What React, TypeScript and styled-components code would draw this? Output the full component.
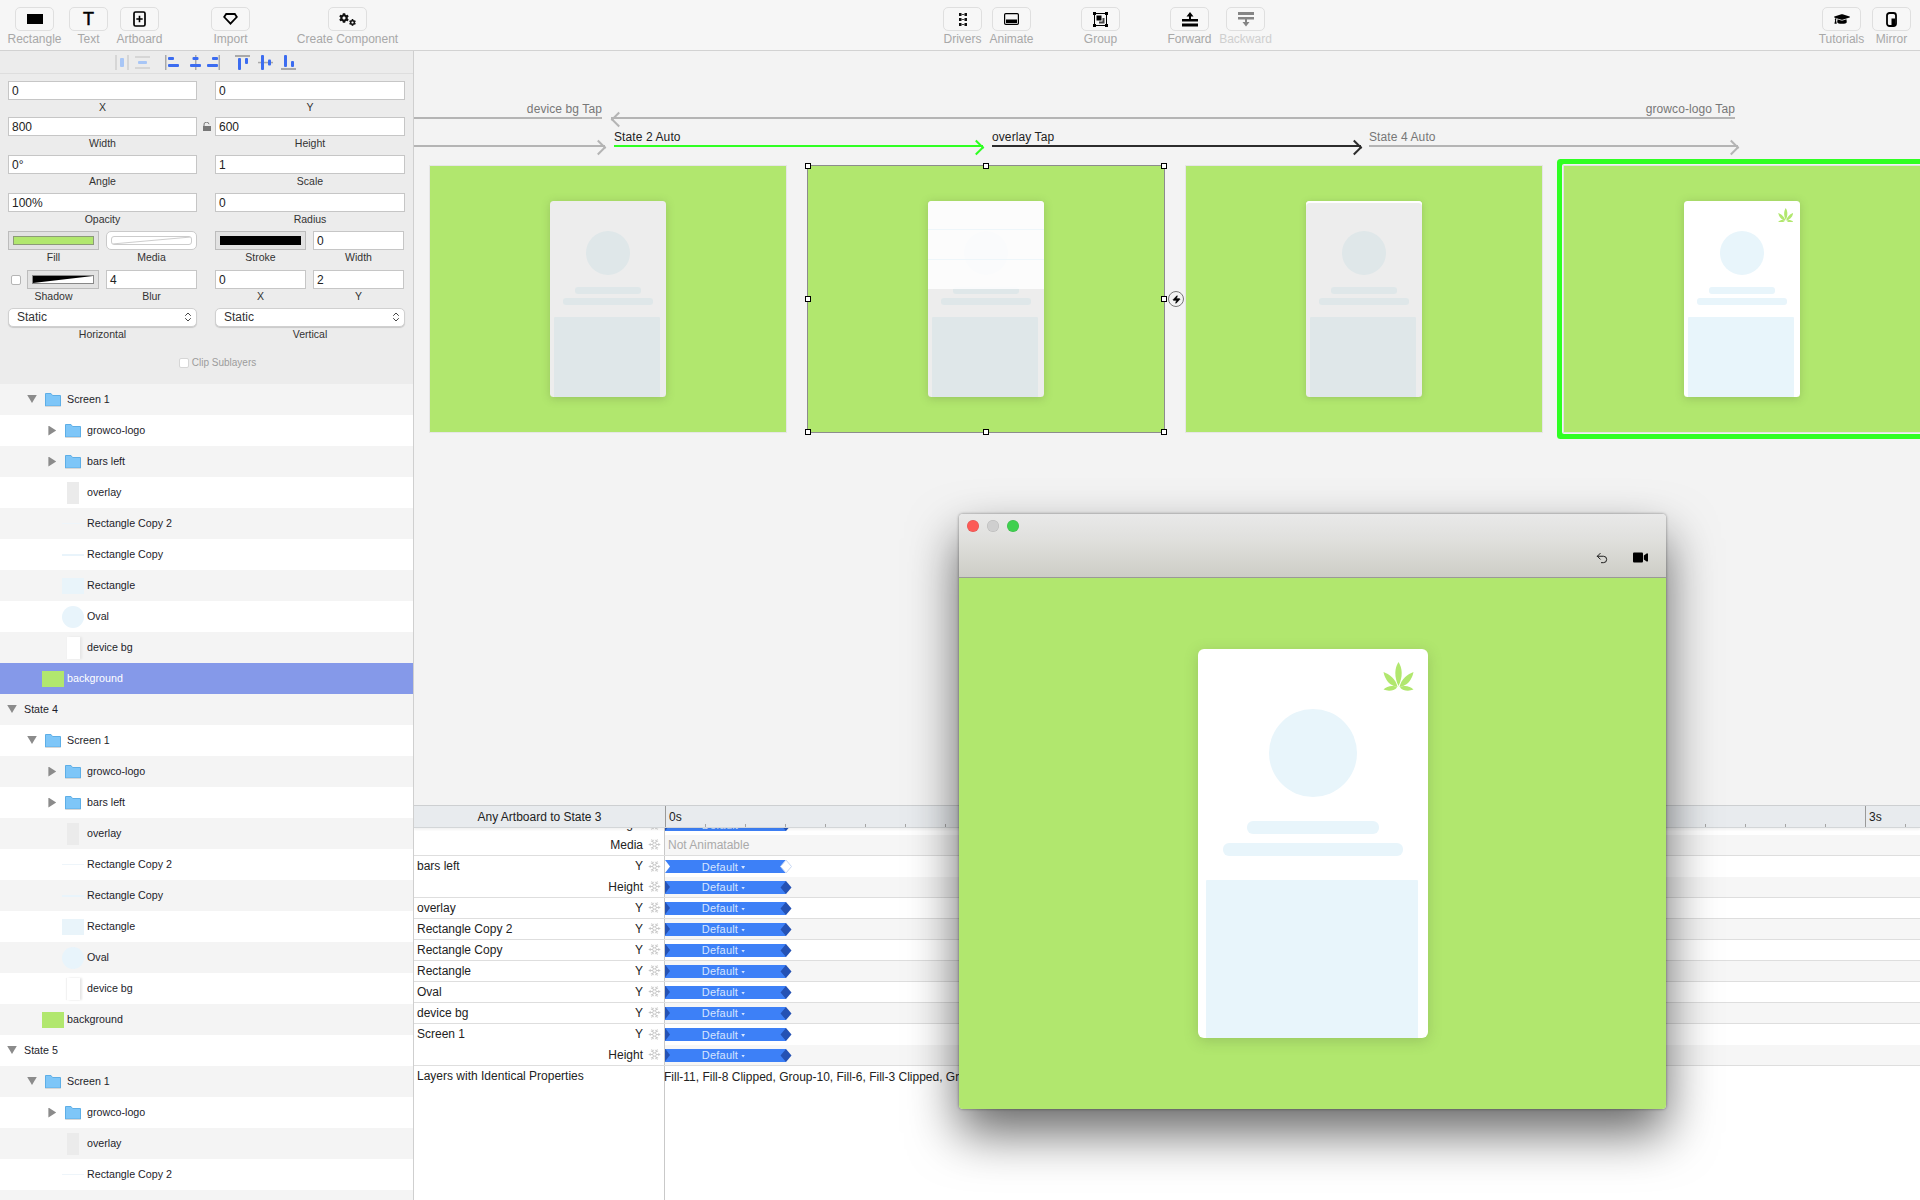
import React from "react";
import styled, { createGlobalStyle, css } from "styled-components";
import { ChevronsUpDown, Snowflake, Undo2, Zap } from "lucide-react";
import { FaCog, FaGraduationCap, FaVideo } from "react-icons/fa";

const GREEN = "#b1e76e";

const Global = createGlobalStyle`
  html, body {
    margin: 0;
    height: 100%;
    overflow: hidden;
    background: #fff;
    font-family: "Liberation Sans", Arial, sans-serif;
    color: #222;
  }
  * { box-sizing: border-box; }
`;

const Page = styled.div`
  width: 1920px;
  height: 1200px;
  display: flex;
  flex-direction: column;
  overflow: hidden;
`;

/* ---------- toolbar ---------- */

const Toolbar = styled.header`
  flex: none;
  height: 51px;
  display: flex;
  padding: 7px 0 0 15px;
  background: #f6f6f6;
  border-bottom: 1px solid #d2d2d2;
`;

const Tool = styled.div<{ $ml?: number }>`
  flex: none;
  width: 39px;
  margin-left: ${(p) => p.$ml ?? 0}px;
  display: flex;
  flex-direction: column;
  align-items: center;
`;

const ToolButton = styled.div`
  width: 39px;
  height: 24px;
  flex: none;
  display: flex;
  align-items: center;
  justify-content: center;
  background: #f7f7f7;
  border: 1px solid #dfdfdf;
  border-radius: 5px;
`;

const ToolLabel = styled.span<{ $off?: boolean }>`
  margin-top: 1px;
  font-size: 12px;
  line-height: 15px;
  white-space: nowrap;
  color: ${(p) => (p.$off ? "#cfcfcf" : "#a8a8a8")};
`;

const TextGlyph = styled.span`
  font-size: 18px;
  line-height: 20px;
  font-weight: 400;
  color: #000;
  -webkit-text-stroke: 0.5px #000;
`;

const GearPair = styled.span`
  display: flex;
  align-items: flex-end;
  color: #111;

  svg:first-child {
    margin-bottom: 3px;
  }
`;

const tools: { label: string; ml: number; off?: boolean; icon: React.ReactNode }[] = [
  {
    label: "Rectangle",
    ml: 0,
    icon: (
      <svg width="16" height="10">
        <rect width="16" height="10" fill="#000" />
      </svg>
    ),
  },
  { label: "Text", ml: 15, icon: <TextGlyph>T</TextGlyph> },
  {
    label: "Artboard",
    ml: 12,
    icon: (
      <svg width="13" height="16" viewBox="0 0 13 16">
        <rect x="1" y="1" width="11" height="14" rx="1.5" fill="none" stroke="#000" strokeWidth="1.7" />
        <path d="M6.5 4.8v6.4M3.3 8h6.4" stroke="#000" strokeWidth="1.6" />
      </svg>
    ),
  },
  {
    label: "Import",
    ml: 52,
    icon: (
      <svg width="15" height="12" viewBox="0 0 15 12">
        <path d="M3.2 1h8.6l2 3-6.3 6.6L1.2 4z" fill="none" stroke="#000" strokeWidth="1.8" />
      </svg>
    ),
  },
  {
    label: "Create Component",
    ml: 78,
    icon: (
      <GearPair>
        <FaCog size={10} />
        <FaCog size={7} />
      </GearPair>
    ),
  },
  {
    label: "Drivers",
    ml: 576,
    icon: (
      <svg width="8" height="13" viewBox="0 0 8 13">
        <path
          d="M0 0h2.5v3H0zM5.500 0H8v3H5.500zM0 5h2.500v3H0zM5.500 5H8v3H5.500zM0 10h2.500v3H0zM5.500 10H8v3H5.500z"
          fill="#111"
        />
        <path d="M2.500 1h3v1h-3zM2.500 6h3v1h-3zM2.500 11h3v1h-3z" fill="#444" />
      </svg>
    ),
  },
  {
    label: "Animate",
    ml: 10,
    icon: (
      <svg width="15" height="12" viewBox="0 0 15 12">
        <rect x="0.6" y="0.6" width="13.8" height="10.8" rx="1.2" fill="none" stroke="#000" strokeWidth="1.2" />
        <rect x="2" y="6.5" width="11" height="3.5" fill="#000" />
      </svg>
    ),
  },
  {
    label: "Group",
    ml: 50,
    icon: (
      <svg width="15" height="15" viewBox="0 0 15 15">
        <rect x="1.5" y="1.5" width="12" height="12" fill="none" stroke="#000" />
        <path d="M0 0h3v3H0zM12 0h3v3h-3zM0 12h3v3H0zM12 12h3v3h-3z" fill="#000" />
        <rect x="3.5" y="3.5" width="5" height="5" fill="#000" />
        <path d="M9.5 6h2v5.5H6v-2h3.500z" fill="#444" />
      </svg>
    ),
  },
  {
    label: "Forward",
    ml: 50,
    icon: (
      <svg width="16" height="15" viewBox="0 0 16 15">
        <path d="M8 0l3.500 4.500H9V7h7v2.500H0V7h7V4.500H4.500z" fill="#000" />
        <rect y="11.500" width="16" height="3" fill="#000" />
      </svg>
    ),
  },
  {
    label: "Backward",
    ml: 17,
    off: true,
    icon: (
      <svg width="16" height="15" viewBox="0 0 16 15">
        <rect width="16" height="3" fill="#858585" />
        <path d="M0 5h16v2.500H9V10h2.500L8 14.500 4.500 10H7V7.500H0z" fill="#858585" />
      </svg>
    ),
  },
  { label: "Tutorials", ml: 557, icon: <FaGraduationCap size={16} color="#000" /> },
  {
    label: "Mirror",
    ml: 11,
    icon: (
      <svg width="11" height="15" viewBox="0 0 11 15">
        <rect x="1" y="1" width="9" height="13" rx="2.500" fill="none" stroke="#000" strokeWidth="1.800" />
        <rect x="5.500" y="6.500" width="3.500" height="6.500" fill="#000" />
      </svg>
    ),
  },
];

/* ---------- inspector ---------- */

const Main = styled.div`
  flex: 1;
  display: flex;
  min-height: 0;
`;

const Sidebar = styled.aside`
  flex: none;
  width: 414px;
  display: flex;
  flex-direction: column;
  border-right: 1px solid #cfcfcf;
  overflow: hidden;
`;

const Inspector = styled.section`
  flex: none;
  height: 333px;
  background: #ececec;
`;

const AlignBar = styled.div`
  height: 23px;
  padding: 4px 0 0 115px;
  display: flex;
  align-items: flex-start;
  border-bottom: 1px solid #dedede;
`;

const AlignIcon = styled.svg<{ $ml: number }>`
  flex: none;
  margin-left: ${(p) => p.$ml}px;
`;

const PropRows = styled.div`
  padding: 7px 0 0 8px;
`;

const PropRow = styled.div<{ $mb?: number }>`
  display: grid;
  grid-template-columns: 189px 190px;
  column-gap: 18px;
  margin-bottom: ${(p) => p.$mb ?? 5}px;
`;

const Pair = styled.div`
  display: grid;
  grid-template-columns: 91px 91px;
  column-gap: 7px;
`;

const Cell = styled.div`
  position: relative;
  min-width: 0;
`;

const Field = styled.div`
  height: 19px;
  padding-left: 3px;
  font-size: 12px;
  line-height: 18px;
  color: #222;
  background: #fff;
  border: 1px solid #c6c6c6;
`;

const PropLabel = styled.div`
  height: 14px;
  font-size: 10.5px;
  line-height: 14px;
  text-align: center;
  color: #333;
`;

const Well = styled.div<{ $round?: boolean }>`
  flex: 1;
  height: 19px;
  padding: 4px;
  background: ${(p) => (p.$round ? "#fff" : "#e2e2e2")};
  border: 1px solid ${(p) => (p.$round ? "#cacaca" : "#bcbcbc")};
  border-radius: ${(p) => (p.$round ? 5 : 0)}px;
`;

const Swatch = styled.div<{ $kind: "fill" | "stroke" }>`
  height: 100%;
  ${(p) =>
    p.$kind === "fill"
      ? css`
          background: ${GREEN};
          border: 1px solid #8c9a78;
        `
      : css`
          background: #000;
        `}
`;

const WellArt = styled.svg<{ $edge: string; $r?: number }>`
  display: block;
  width: 100%;
  height: 100%;
  background: #fff;
  border: 1px solid ${(p) => p.$edge};
  border-radius: ${(p) => p.$r ?? 0}px;
`;

const ShadowLine = styled.div`
  display: flex;
  align-items: center;
  gap: 6px;
`;

const CheckBox = styled.span<{ $ml?: number; $faint?: boolean }>`
  flex: none;
  width: 10px;
  height: 10px;
  margin-left: ${(p) => p.$ml ?? 0}px;
  background: #fff;
  border: 1px solid ${(p) => (p.$faint ? "#d6d6d6" : "#b5b5b5")};
  border-radius: 2px;
`;

const Select = styled.div`
  height: 19px;
  padding: 0 2px 1px 8px;
  display: flex;
  align-items: center;
  justify-content: space-between;
  font-size: 12px;
  color: #333;
  background: #fff;
  border: 1px solid #d0d0d0;
  border-radius: 5px;
  box-shadow: 0 1px 1px rgba(0, 0, 0, 0.15);
`;

const Lock = styled.svg`
  position: absolute;
  right: -14px;
  top: 5px;
`;

const ClipRow = styled.div`
  margin-top: 16px;
  display: flex;
  align-items: center;
  justify-content: center;
  gap: 3px;
  padding-left: 14px;
  font-size: 10px;
  color: #9c9c9c;
`;

/* ---------- layer list ---------- */

const LayerList = styled.div`
  flex: 1;
  overflow: hidden;
`;

const LayerRow = styled.div<{ $depth: number; $alt: boolean; $selected?: boolean }>`
  height: 31px;
  display: flex;
  align-items: center;
  padding-left: ${(p) => 6 + p.$depth * 20}px;
  background: ${(p) => (p.$selected ? "#8599e9" : p.$alt ? "#f4f4f4" : "#fff")};
  color: ${(p) => (p.$selected ? "#fff" : "#1d1d2b")};
`;

const Caret = styled.span<{ $open?: boolean; $hidden?: boolean }>`
  flex: none;
  width: 12px;
  height: 10px;
  visibility: ${(p) => (p.$hidden ? "hidden" : "visible")};
  background: #8b8b8b;
  clip-path: ${(p) =>
    p.$open
      ? "polygon(10% 5%, 90% 5%, 50% 85%)"
      : "polygon(20% 0, 85% 50%, 20% 100%)"};
`;

const IconSlot = styled.span`
  flex: none;
  width: 22px;
  height: 22px;
  margin-left: 4px;
  display: flex;
  align-items: center;
  justify-content: center;
`;

const thumbs = {
  overlay: css`
    width: 12px;
    height: 22px;
    background: #ebebeb;
  `,
  faint: css`
    width: 22px;
    height: 1px;
    background: #eef5fa;
  `,
  line: css`
    width: 22px;
    height: 2px;
    background: #e9f4fb;
  `,
  rect: css`
    width: 22px;
    height: 16px;
    background: #e9f4fa;
  `,
  oval: css`
    width: 22px;
    height: 22px;
    border-radius: 50%;
    background: #e8f4fb;
  `,
  device: css`
    width: 13px;
    height: 22px;
    background: #fff;
    box-shadow: 2px 0 2px #e6e6e6, -1px 0 1px #f2f2f2;
  `,
  swatch: css`
    width: 22px;
    height: 16px;
    background: ${GREEN};
  `,
};

type ThumbKind = keyof typeof thumbs;

const Thumb = styled.span<{ $kind: ThumbKind }>`
  display: block;
  flex: none;
  ${(p) => thumbs[p.$kind]}
`;

const LayerName = styled.span<{ $ml: number }>`
  margin: -1px 0 0 ${(p) => p.$ml}px;
  font-size: 10.7px;
  white-space: nowrap;
`;

const Folder = () => (
  <svg width="16" height="15" viewBox="0 0 16 15">
    <path d="M0.500 1.500h5.500l1.500 2h8v10.500h-15z" fill="#7ec6f8" stroke="#5eaee6" />
    <rect x="0.500" y="14" width="15" height="1" fill="#d6d6d6" />
  </svg>
);

type Layer = {
  name: string;
  depth: number;
  open?: boolean;
  folder?: boolean;
  thumb?: ThumbKind;
  selected?: boolean;
};

const screenLayers = (withBars: boolean, selected: boolean): Layer[] => [
  { name: "Screen 1", depth: 1, open: true, folder: true },
  { name: "growco-logo", depth: 2, folder: true },
  ...(withBars ? [{ name: "bars left", depth: 2, folder: true }] : []),
  { name: "overlay", depth: 2, thumb: "overlay" },
  { name: "Rectangle Copy 2", depth: 2, thumb: "faint" },
  { name: "Rectangle Copy", depth: 2, thumb: "line" },
  { name: "Rectangle", depth: 2, thumb: "rect" },
  { name: "Oval", depth: 2, thumb: "oval" },
  { name: "device bg", depth: 2, thumb: "device" },
  { name: "background", depth: 1, thumb: "swatch", selected },
];

const layers: Layer[] = [
  ...screenLayers(true, true),
  { name: "State 4", depth: 0, open: true },
  ...screenLayers(true, false),
  { name: "State 5", depth: 0, open: true },
  ...screenLayers(false, false).slice(0, 4),
  { name: "", depth: 2 },
];

/* ---------- canvas ---------- */

const Workspace = styled.div`
  position: relative;
  flex: 1;
  min-width: 0;
  display: flex;
  flex-direction: column;
`;

const Canvas = styled.div`
  flex: none;
  height: 754px;
  padding-top: 51px;
  background: #f3f3f3;
  overflow: hidden;
`;

const ConnectorRow = styled.div<{ $mt?: number }>`
  display: flex;
  margin-top: ${(p) => p.$mt ?? 0}px;
`;

const Connector = styled.div<{ $w: number; $ml?: number }>`
  flex: none;
  width: ${(p) => p.$w}px;
  margin-left: ${(p) => p.$ml ?? 0}px;
`;

const ConnectorLabel = styled.div<{ $tone: string; $right?: boolean }>`
  height: 15px;
  font-size: 12px;
  line-height: 14px;
  white-space: nowrap;
  letter-spacing: 0.1px;
  text-align: ${(p) => (p.$right ? "right" : "left")};
  color: ${(p) => p.$tone};
`;

const ConnectorLine = styled.div<{ $color: string; $head?: "left" | "right" }>`
  position: relative;
  height: 2px;
  background: ${(p) => p.$color};
  ${(p) =>
    p.$head &&
    css`
      &::after {
        content: "";
        position: absolute;
        top: -3.5px;
        ${p.$head === "right" ? "right: 1.5px" : "left: 1.5px"};
        width: 9px;
        height: 9px;
        border-top: 2px solid ${p.$color};
        border-right: 2px solid ${p.$color};
        transform: rotate(${p.$head === "right" ? 45 : -135}deg);
      }
    `}
`;

const Artboards = styled.div`
  display: flex;
  gap: 20px;
  margin: 18px 0 0 15px;
`;

const Artboard = styled.div<{ $selected?: boolean; $current?: boolean }>`
  position: relative;
  flex: none;
  width: 358px;
  height: 268px;
  display: flex;
  align-items: center;
  justify-content: center;
  background: ${GREEN};
  border: 1px solid ${(p) => (p.$selected ? "#8c8c8c" : "#e6e6e6")};
  ${(p) =>
    p.$current &&
    css`
      border-color: #e2e2e2;
      box-shadow: 0 0 0 1px #f3f3f3, 0 0 0 6px #2fff22;
      border-radius: 1px;
    `}
`;

const Handle = styled.span<{ $x: number; $y: number }>`
  position: absolute;
  left: calc(${(p) => p.$x}% - 3px);
  top: calc(${(p) => p.$y}% - 3px);
  width: 6px;
  height: 6px;
  background: #fff;
  border: 1px solid #000;
`;

const Bolt = styled.span`
  position: absolute;
  left: calc(100% + 4px);
  top: calc(50% - 8px);
  width: 16px;
  height: 16px;
  display: flex;
  align-items: center;
  justify-content: center;
  background: #f3f3f3;
  border: 1px solid #777;
  border-radius: 50%;
`;

type Tone = "live" | "dim";

const tone = (t: Tone) => (t === "live" ? "#e8f5fb" : "#dfe7e9");

const Phone = styled.div<{ $s: number; $tone: Tone; $strip?: boolean }>`
  position: relative;
  flex: none;
  width: ${(p) => 230 * p.$s + (p.$s < 1 ? 1 : 0)}px;
  height: ${(p) => 389 * p.$s + (p.$s < 1 ? 1 : 0)}px;
  padding-top: ${(p) => 60 * p.$s}px;
  display: flex;
  flex-direction: column;
  align-items: center;
  overflow: hidden;
  background: ${(p) => (p.$tone === "live" ? "#fff" : "#ededed")};
  border-radius: ${(p) => 5 * p.$s + 1}px;
  box-shadow: 0 ${(p) => 3 * p.$s}px ${(p) => 12 * p.$s + 2}px rgba(90, 110, 60, 0.28);
  ${(p) => p.$strip && "box-shadow: inset 0 2px #fff, 0 1px 6px rgba(90, 110, 60, 0.28);"}
`;

const PhoneOval = styled.div<{ $s: number; $tone: Tone }>`
  flex: none;
  width: ${(p) => 88 * p.$s}px;
  height: ${(p) => 88 * p.$s}px;
  border-radius: 50%;
  background: ${(p) => tone(p.$tone)};
`;

const PhoneBar = styled.div<{ $s: number; $tone: Tone; $w: number; $mt: number }>`
  flex: none;
  width: ${(p) => p.$w * p.$s}px;
  height: ${(p) => 12.5 * p.$s}px;
  margin-top: ${(p) => p.$mt * p.$s}px;
  border-radius: ${(p) => 6 * p.$s}px;
  background: ${(p) => tone(p.$tone)};
`;

const PhonePanel = styled.div<{ $s: number; $tone: Tone }>`
  flex: 1;
  align-self: flex-start;
  width: ${(p) => 212 * p.$s}px;
  margin: ${(p) => 24.5 * p.$s}px 0 0 ${(p) => 8 * p.$s}px;
  border-radius: 1px 1px 0 0;
  background: ${(p) => tone(p.$tone)};
`;

const PhoneOverlay = styled.div`
  position: absolute;
  left: 0;
  right: 0;
  top: 0;
  height: 88px;
  background: rgba(255, 255, 255, 0.83);

  &::before,
  &::after {
    content: "";
    position: absolute;
    left: 0;
    right: 0;
    height: 1px;
    background: #eef6fa;
  }
  &::before {
    top: 28px;
  }
  &::after {
    top: 58px;
  }
`;

const LogoMark = styled.svg<{ $s: number }>`
  position: absolute;
  top: ${(p) => 13 * p.$s}px;
  right: ${(p) => 14 * p.$s}px;
  width: ${(p) => 31 * p.$s}px;
  height: ${(p) => 29 * p.$s}px;
`;

const Logo = ({ s }: { s: number }) => (
  <LogoMark $s={s} viewBox="0 0 31 29">
    <g fill={GREEN}>
      <path d="M15.500 0C19.500 6 20 15 15.500 24 11 15 11.500 6 15.500 0Z" />
      <path d="M0.500 10C6 12 13 17 14.500 25 7 24 2 18 0.500 10Z" />
      <path d="M30.500 10C25 12 18 17 16.500 25 24 24 29 18 30.500 10Z" />
      <path d="M14 25.500C10 23 4 24 0.500 27.500 5 29.500 11 29 14 25.500Z" />
      <path d="M17 25.500C21 23 27 24 30.500 27.500 26 29.500 20 29 17 25.500Z" />
    </g>
  </LogoMark>
);

const PhoneBody = ({ s, t }: { s: number; t: Tone }) => (
  <>
    <PhoneOval $s={s} $tone={t} />
    <PhoneBar $s={s} $tone={t} $w={132} $mt={24} />
    <PhoneBar $s={s} $tone={t} $w={180} $mt={9.5} />
    <PhonePanel $s={s} $tone={t} />
  </>
);

const handles: [number, number][] = [
  [0, 0],
  [50, 0],
  [100, 0],
  [0, 50],
  [100, 50],
  [0, 100],
  [50, 100],
  [100, 100],
];

/* ---------- preview window ---------- */

const PreviewWindow = styled.div`
  position: absolute;
  left: 545px;
  top: 463px;
  width: 707px;
  height: 595px;
  display: flex;
  flex-direction: column;
  border-radius: 4px;
  overflow: hidden;
  z-index: 5;
`;

const WindowShadow = styled.div`
  position: absolute;
  left: 545px;
  top: 463px;
  width: 707px;
  height: 595px;
  border-radius: 4px;
  box-shadow: 0 24px 50px rgba(0, 0, 0, 0.6), 0 0 3px rgba(0, 0, 0, 0.45);
  z-index: 4;
`;

const TitleBar = styled.div`
  flex: none;
  height: 64px;
  display: flex;
  flex-direction: column;
  justify-content: space-between;
  padding: 6px 18px 12px 8px;
  background: linear-gradient(#e9e9e9, #e0e0dd 40%, #cdcdc6);
  border-bottom: 1px solid #9a9a96;
`;

const Lights = styled.div`
  display: flex;
  gap: 8px;
`;

const Light = styled.span<{ $c: string }>`
  width: 12px;
  height: 12px;
  border-radius: 50%;
  background: ${(p) => p.$c};
  box-shadow: inset 0 0 0 0.5px rgba(0, 0, 0, 0.12);
`;

const TitleActions = styled.div`
  display: flex;
  justify-content: flex-end;
  align-items: center;
  gap: 24px;
`;

const WindowBody = styled.div`
  flex: 1;
  display: flex;
  align-items: center;
  justify-content: center;
  background: ${GREEN};
`;

/* ---------- timeline ---------- */

const Timeline = styled.div`
  flex: 1;
  display: flex;
  flex-direction: column;
  min-height: 0;
  overflow: hidden;
  background: #fff;
`;

const TimelineHead = styled.div`
  position: relative;
  z-index: 2;
  flex: none;
  height: 23px;
  display: grid;
  grid-template-columns: 251px 1fr;
  background: #e8ebee;
  border-top: 1px solid #cdcfd1;
  border-bottom: 1px solid #d3d6d8;
  box-shadow: 0 2px 2px rgba(0, 0, 0, 0.05);
`;

const TimelineTitle = styled.div`
  font-size: 12px;
  line-height: 22px;
  text-align: center;
`;

const Ruler = styled.div`
  display: flex;
  overflow: hidden;
`;

const Second = styled.div`
  flex: none;
  width: 400px;
  height: 21px;
  padding-left: 3px;
  font-size: 12px;
  line-height: 22px;
  color: #222;
  border-left: 1px solid #9a9a9a;
  background-image: linear-gradient(90deg, #a5a5a5 1px, transparent 1px);
  background-size: 40px 3px;
  background-position: 39px bottom;
  background-repeat: repeat-x;
`;

const TimelineBody = styled.div`
  flex: 1;
  display: flex;
  flex-direction: column;
  margin-top: -14px;
`;

const TimeRow = styled.div<{ $end?: boolean }>`
  flex: none;
  height: 21px;
  display: grid;
  grid-template-columns: 251px 1fr;
  ${(p) => p.$end && "border-bottom: 1px solid #dedede;"}
`;

const TimeFiller = styled.div`
  flex: 1;
  display: grid;
  grid-template-columns: 251px 1fr;
`;

const RowLabels = styled.div`
  display: flex;
  align-items: center;
  justify-content: space-between;
  padding: 0 3px 1px;
  font-size: 12px;
  white-space: nowrap;
  color: #222;
  border-right: 1px solid #c9c9c9;
`;

const PropName = styled.span`
  margin-left: auto;
  margin-right: 5px;
`;

const Track = styled.div<{ $alt?: boolean }>`
  display: flex;
  align-items: center;
  background: ${(p) => (p.$alt ? "#f6f6f6" : "#fff")};
  font-size: 12px;
  white-space: nowrap;
`;

const Curve = styled.div<{ $hollow?: boolean }>`
  position: relative;
  width: 121px;
  height: 13px;
  display: flex;
  align-items: center;
  justify-content: center;
  gap: 3px;
  padding-right: 4px;
  font-size: 11px;
  letter-spacing: 0.2px;
  color: #d6e5ff;
  background: #3d80f7;

  &::before {
    content: "";
    position: absolute;
    left: 0;
    top: 0;
    width: 5px;
    height: 13px;
    background: ${(p) => (p.$hollow ? "#fff" : "#2552b4")};
    clip-path: polygon(0 0, 100% 50%, 0 100%);
  }
`;

const CurveEnd = styled.svg`
  position: absolute;
  right: -6px;
  top: -1px;
  width: 12px;
  height: 15px;
`;

const CurveCaret = styled.span`
  width: 4px;
  height: 3px;
  margin-top: 2px;
  background: #d6e5ff;
  clip-path: polygon(0 0, 100% 0, 50% 100%);
`;

const Muted = styled.span`
  margin-left: 3px;
  color: #aaa;
`;

const Identical = styled.span`
  margin-left: -1px;
  color: #222;
`;

type TimeItem = { name?: string; prop: string; end?: boolean; hollow?: boolean; muted?: boolean };

const timeRows: TimeItem[] = [
  { prop: "Height" },
  { prop: "Media", end: true, muted: true },
  { name: "bars left", prop: "Y", hollow: true },
  { prop: "Height", end: true },
  { name: "overlay", prop: "Y", end: true },
  { name: "Rectangle Copy 2", prop: "Y", end: true },
  { name: "Rectangle Copy", prop: "Y", end: true },
  { name: "Rectangle", prop: "Y", end: true },
  { name: "Oval", prop: "Y", end: true },
  { name: "device bg", prop: "Y", end: true },
  { name: "Screen 1", prop: "Y" },
  { prop: "Height", end: true },
];

const alignIcons: { ml: number; off?: boolean; rule: number[]; bars: number[][] }[] = [
  { ml: 0, off: true, rule: [0, 0, 2, 15, 12, 0, 2, 15], bars: [[5, 3, 4, 9]] },
  { ml: 5, off: true, rule: [0, 1, 15, 2, 0, 12, 15, 2], bars: [[3, 6, 9, 3]] },
  { ml: 15, rule: [0, 0, 1.5, 15], bars: [[3, 2, 6, 3], [3, 9, 11, 3]] },
  { ml: 8, rule: [7, 0, 1.5, 15], bars: [[4.5, 2, 6, 3], [2, 9, 11, 3]] },
  { ml: 3, rule: [12.5, 0, 1.5, 15], bars: [[6, 2, 6, 3], [1, 9, 11, 3]] },
  { ml: 14, rule: [0, 0, 15, 2], bars: [[3, 3, 3, 12], [10, 3, 3, 6]] },
  { ml: 8, rule: [0, 6.8, 15, 1.5], bars: [[3, 0, 3, 15], [10, 4.5, 3, 6]] },
  { ml: 8, rule: [0, 13, 15, 2], bars: [[3, 0, 3, 12], [10, 6, 3, 6]] },
];

const App = () => (
  <Page>
    <Global />
    <Toolbar>
      {tools.map((t) => (
        <Tool key={t.label} $ml={t.ml}>
          <ToolButton>{t.icon}</ToolButton>
          <ToolLabel $off={t.off}>{t.label}</ToolLabel>
        </Tool>
      ))}
    </Toolbar>
    <Main>
      <Sidebar>
        <Inspector>
          <AlignBar>
            {alignIcons.map((a, i) => (
              <AlignIcon key={i} $ml={a.ml} width="15" height="15" viewBox="0 0 15 15">
                {[0, 4]
                  .filter((o) => a.rule.length > o)
                  .map((o) => (
                    <rect
                      key={o}
                      x={a.rule[o]}
                      y={a.rule[o + 1]}
                      width={a.rule[o + 2]}
                      height={a.rule[o + 3]}
                      fill={a.off ? "#d6d6d6" : "#a9a9a9"}
                    />
                  ))}
                {a.bars.map((b, j) => (
                  <rect
                    key={j}
                    x={b[0]}
                    y={b[1]}
                    width={b[2]}
                    height={b[3]}
                    rx="1"
                    fill={a.off ? "#a8c6f6" : "#3c6cf0"}
                  />
                ))}
              </AlignIcon>
            ))}
          </AlignBar>
          <PropRows>
            <PropRow $mb={3}>
              <Cell>
                <Field>0</Field>
                <PropLabel>X</PropLabel>
              </Cell>
              <Cell>
                <Field>0</Field>
                <PropLabel>Y</PropLabel>
              </Cell>
            </PropRow>
            <PropRow>
              <Cell>
                <Field>800</Field>
                <PropLabel>Width</PropLabel>
                <Lock width="8" height="9" viewBox="0 0 8 9">
                  <path d="M1 4V3a2.500 2.500 0 0 1 5 -0.800" fill="none" stroke="#777" strokeWidth="1" />
                  <rect y="4" width="8" height="5" fill="#777" />
                </Lock>
              </Cell>
              <Cell>
                <Field>600</Field>
                <PropLabel>Height</PropLabel>
              </Cell>
            </PropRow>
            <PropRow>
              <Cell>
                <Field>0°</Field>
                <PropLabel>Angle</PropLabel>
              </Cell>
              <Cell>
                <Field>1</Field>
                <PropLabel>Scale</PropLabel>
              </Cell>
            </PropRow>
            <PropRow>
              <Cell>
                <Field>100%</Field>
                <PropLabel>Opacity</PropLabel>
              </Cell>
              <Cell>
                <Field>0</Field>
                <PropLabel>Radius</PropLabel>
              </Cell>
            </PropRow>
            <PropRow $mb={6}>
              <Pair>
                <Cell>
                  <Well>
                    <Swatch $kind="fill" />
                  </Well>
                  <PropLabel>Fill</PropLabel>
                </Cell>
                <Cell>
                  <Well $round>
                    <WellArt $edge="#ccc" $r={3} viewBox="0 0 80 8" preserveAspectRatio="none">
                      <line x1="0" y1="8" x2="80" y2="0" stroke="#c9c9c9" strokeWidth="1" />
                    </WellArt>
                  </Well>
                  <PropLabel>Media</PropLabel>
                </Cell>
              </Pair>
              <Pair>
                <Cell>
                  <Well>
                    <Swatch $kind="stroke" />
                  </Well>
                  <PropLabel>Stroke</PropLabel>
                </Cell>
                <Cell>
                  <Field>0</Field>
                  <PropLabel>Width</PropLabel>
                </Cell>
              </Pair>
            </PropRow>
            <PropRow>
              <Pair>
                <Cell>
                  <ShadowLine>
                    <CheckBox $ml={3} />
                    <Well>
                      <WellArt $edge="#888" viewBox="0 0 60 8" preserveAspectRatio="none">
                        <polygon points="0,0 60,0 0,8" fill="#000" />
                      </WellArt>
                    </Well>
                  </ShadowLine>
                  <PropLabel>Shadow</PropLabel>
                </Cell>
                <Cell>
                  <Field>4</Field>
                  <PropLabel>Blur</PropLabel>
                </Cell>
              </Pair>
              <Pair>
                <Cell>
                  <Field>0</Field>
                  <PropLabel>X</PropLabel>
                </Cell>
                <Cell>
                  <Field>2</Field>
                  <PropLabel>Y</PropLabel>
                </Cell>
              </Pair>
            </PropRow>
            <PropRow>
              <Cell>
                <Select>
                  Static
                  <ChevronsUpDown size={12} color="#444" />
                </Select>
                <PropLabel>Horizontal</PropLabel>
              </Cell>
              <Cell>
                <Select>
                  Static
                  <ChevronsUpDown size={12} color="#444" />
                </Select>
                <PropLabel>Vertical</PropLabel>
              </Cell>
            </PropRow>
            <ClipRow>
              <CheckBox $faint />
              Clip Sublayers
            </ClipRow>
          </PropRows>
        </Inspector>
        <LayerList>
          {layers.map((l, i) => (
            <LayerRow key={i} $depth={l.depth} $alt={i % 2 === 0} $selected={l.selected}>
              <Caret $open={l.open} $hidden={!l.folder && !l.open} />
              {l.depth > 0 && (
                <IconSlot>
                  {l.folder ? <Folder /> : l.thumb && <Thumb $kind={l.thumb} />}
                </IconSlot>
              )}
              <LayerName $ml={l.depth > 0 ? 3 : 6}>{l.name}</LayerName>
            </LayerRow>
          ))}
        </LayerList>
      </Sidebar>

      <Workspace>
        <Canvas>
          <ConnectorRow>
            <Connector $w={188}>
              <ConnectorLabel $tone="#777" $right>
                device bg Tap
              </ConnectorLabel>
              <ConnectorLine $color="#b4b4b4" />
            </Connector>
            <Connector $w={1124} $ml={9}>
              <ConnectorLabel $tone="#777" $right>
                growco-logo Tap
              </ConnectorLabel>
              <ConnectorLine $color="#b4b4b4" $head="left" />
            </Connector>
          </ConnectorRow>
          <ConnectorRow $mt={11}>
            <Connector $w={191}>
              <ConnectorLabel $tone="#777" />
              <ConnectorLine $color="#b4b4b4" $head="right" />
            </Connector>
            <Connector $w={369} $ml={9}>
              <ConnectorLabel $tone="#222">State 2 Auto</ConnectorLabel>
              <ConnectorLine $color="#2fff22" $head="right" />
            </Connector>
            <Connector $w={369} $ml={9}>
              <ConnectorLabel $tone="#222">overlay Tap</ConnectorLabel>
              <ConnectorLine $color="#2c2c2c" $head="right" />
            </Connector>
            <Connector $w={369} $ml={8}>
              <ConnectorLabel $tone="#777">State 4 Auto</ConnectorLabel>
              <ConnectorLine $color="#b4b4b4" $head="right" />
            </Connector>
          </ConnectorRow>
          <Artboards>
            <Artboard>
              <Phone $s={0.5} $tone="dim">
                <PhoneBody s={0.5} t="dim" />
              </Phone>
            </Artboard>
            <Artboard $selected>
              <Phone $s={0.5} $tone="dim">
                <PhoneBody s={0.5} t="dim" />
                <PhoneOverlay />
              </Phone>
              {handles.map(([x, y]) => (
                <Handle key={`${x}-${y}`} $x={x} $y={y} />
              ))}
              <Bolt>
                <Zap size={9} fill="#000" color="#000" />
              </Bolt>
            </Artboard>
            <Artboard>
              <Phone $s={0.5} $tone="dim" $strip>
                <PhoneBody s={0.5} t="dim" />
              </Phone>
            </Artboard>
            <Artboard $current>
              <Phone $s={0.5} $tone="live">
                <PhoneBody s={0.5} t="live" />
                <Logo s={0.5} />
              </Phone>
            </Artboard>
          </Artboards>
        </Canvas>

        <Timeline>
          <TimelineHead>
            <TimelineTitle>Any Artboard to State 3</TimelineTitle>
            <Ruler>
              {["0s", "1s", "2s", "3s"].map((s) => (
                <Second key={s}>{s}</Second>
              ))}
            </Ruler>
          </TimelineHead>
          <TimelineBody>
            {timeRows.map((r, i) => (
              <TimeRow key={i} $end={r.end}>
                <RowLabels>
                  {r.name && <span>{r.name}</span>}
                  <PropName>{r.prop}</PropName>
                  <Snowflake size={13} color="#c4c4c4" strokeWidth={1.6} />
                </RowLabels>
                <Track $alt={i % 2 === 1 ? true : undefined}>
                  {r.muted ? (
                    <Muted>Not Animatable</Muted>
                  ) : (
                    <Curve $hollow={r.hollow}>
                      Default
                      <CurveCaret />
                      <CurveEnd viewBox="0 0 12 15">
                        <polygon
                          points="6,1 11.5,7.500 6,14 0.500,7.500"
                          fill={r.hollow ? "#fff" : "#2552b4"}
                          stroke={r.hollow ? "#c6d6f2" : "none"}
                        />
                      </CurveEnd>
                    </Curve>
                  )}
                </Track>
              </TimeRow>
            ))}
            <TimeRow>
              <RowLabels>
                <span>Layers with Identical Properties</span>
              </RowLabels>
              <Track>
                <Identical>Fill-11, Fill-8 Clipped, Group-10, Fill-6, Fill-3 Clipped, Group-8</Identical>
              </Track>
            </TimeRow>
            <TimeFiller>
              <RowLabels />
              <Track />
            </TimeFiller>
          </TimelineBody>
        </Timeline>

        <WindowShadow />
        <PreviewWindow>
          <TitleBar>
            <Lights>
              <Light $c="#fc5b57" />
              <Light $c="#cfcfcf" />
              <Light $c="#3fd04f" />
            </Lights>
            <TitleActions>
              <Undo2 size={14} color="#111" strokeWidth={1.6} />
              <FaVideo size={15} color="#000" />
            </TitleActions>
          </TitleBar>
          <WindowBody>
            <Phone $s={1} $tone="live">
              <PhoneBody s={1} t="live" />
              <Logo s={1} />
            </Phone>
          </WindowBody>
        </PreviewWindow>
      </Workspace>
    </Main>
  </Page>
);

export default App;
